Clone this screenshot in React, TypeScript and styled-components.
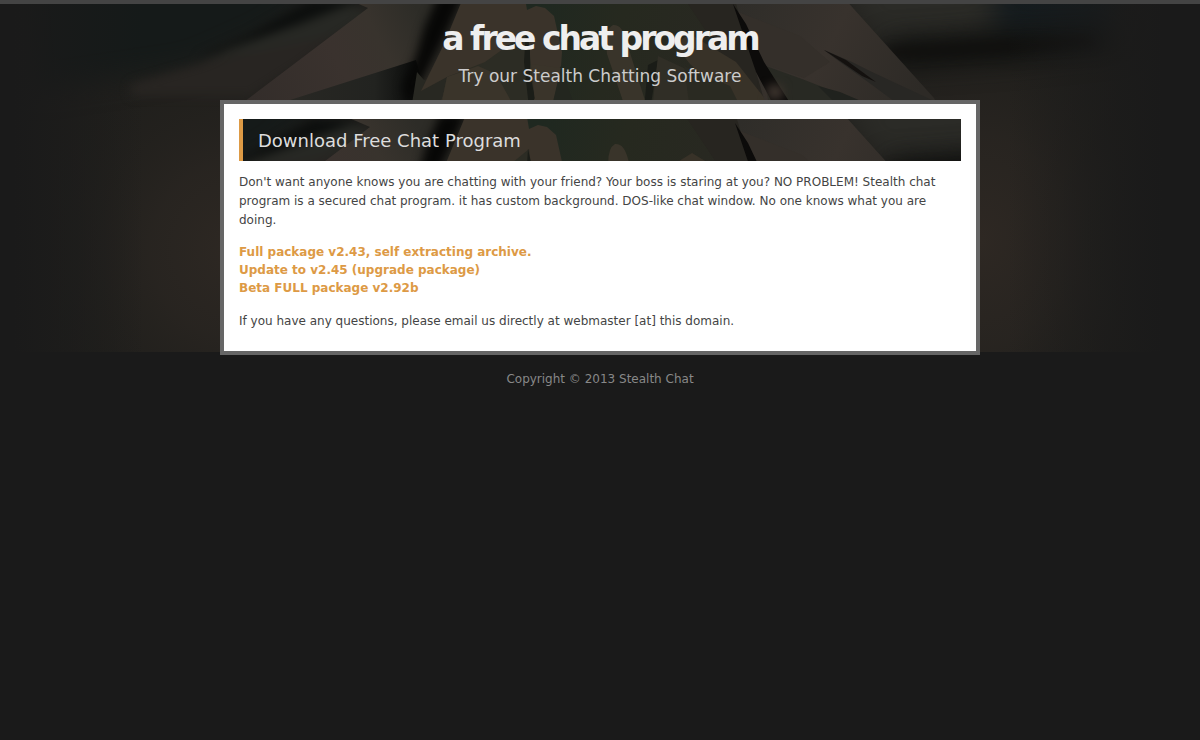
import React, { useId } from "react";
import styled, { createGlobalStyle } from "styled-components";

const GlobalStyle = createGlobalStyle`
  body {
    margin: 0;
    background: #1a1a1a;
    color: #444;
    font-family: "DejaVu Sans", Verdana, sans-serif;
    font-size: 12px;
    line-height: 18px;
  }
`;

const Page = styled.div`
  position: relative;
  display: flex;
  flex-direction: column;
  align-items: center;
  border-top: 4px solid #444;
`;

const ArtLayer = styled.div<{ $height: string; $align: string }>`
  position: absolute;
  z-index: 0;
  top: 0;
  left: 0;
  right: 0;
  height: ${(p) => p.$height};
  display: flex;
  justify-content: center;
  align-items: ${(p) => p.$align};
  overflow: hidden;

  svg {
    flex: none;
  }
`;

const Header = styled.header`
  position: relative;
  z-index: 1;
  padding: 16px 16px 12px;
  text-align: center;
`;

const SiteTitle = styled.h1`
  margin: 0;
  color: #eee;
  font-size: 33px;
  line-height: 38px;
  letter-spacing: -3px;
`;

const Tagline = styled.p`
  margin: 6px 0 0;
  color: #ccc;
  font-size: 17px;
  line-height: 24px;
`;

const Panel = styled.main`
  position: relative;
  z-index: 1;
  box-sizing: border-box;
  width: 100%;
  max-width: 760px;
  padding: 15px 15px 20px;
  border: 4px solid #666;
  background: #fff;
`;

const Heading = styled.h2`
  position: relative;
  margin: 0 0 12px;
  padding: 10px 15px 8px;
  border-left: 4px solid #dd9a45;
  background: #1a1a1a;
  color: #ddd;
  font-size: 18px;
  font-weight: 400;
  line-height: 24px;
  overflow: hidden;
`;

const HeadingText = styled.span`
  position: relative;
  z-index: 1;
`;

const Paragraph = styled.p`
  margin: 0;
  line-height: 19px;
`;

const Downloads = styled.ul`
  list-style: none;
  margin: 13px 0 15px;
  padding: 0;
`;

const DownloadLink = styled.a`
  color: #dd9a45;
  font-weight: 700;
  line-height: 18px;
  text-decoration: none;
`;

const Footer = styled.footer`
  position: relative;
  z-index: 1;
  padding: 15px 0;
  color: #888;
`;

/* Overlapping leaf blades fading out into the page colour at both sides. */
function LeafArt() {
  const id = useId().replace(/[^a-zA-Z0-9]/g, "");
  const u = (n: string) => `url(#${id}${n})`;
  return (
    <svg
      width="1200"
      height="352"
      viewBox="0 0 1200 352"
      colorInterpolationFilters="sRGB"
      aria-hidden="true"
    >
      <defs>
        <filter id={`${id}soft`} x="-50%" y="-50%" width="200%" height="200%">
          <feGaussianBlur stdDeviation="5" />
        </filter>
        <filter id={`${id}wide`} x="-50%" y="-100%" width="200%" height="300%">
          <feGaussianBlur stdDeviation="14" />
        </filter>
        <filter id={`${id}edge`}>
          <feGaussianBlur stdDeviation="0.6" />
        </filter>
        <radialGradient id={`${id}glow`}>
          <stop offset="0" stopColor="#2e2823" />
          <stop offset="0.4" stopColor="#292521" stopOpacity="0.85" />
          <stop offset="1" stopColor="#201f1c" stopOpacity="0" />
        </radialGradient>
        <linearGradient id={`${id}bladeL`} x1="250" y1="100" x2="418" y2="10" gradientUnits="userSpaceOnUse">
          <stop offset="0" stopColor="#332d2a" />
          <stop offset="0.5" stopColor="#3a322e" />
          <stop offset="0.75" stopColor="#38332d" />
          <stop offset="1" stopColor="#2d2c27" />
        </linearGradient>
        <linearGradient id={`${id}bladeR`} x1="740" y1="0" x2="920" y2="90" gradientUnits="userSpaceOnUse">
          <stop offset="0" stopColor="#2f2d29" />
          <stop offset="0.5" stopColor="#38322d" />
          <stop offset="1" stopColor="#2d2a26" />
        </linearGradient>
        <linearGradient id={`${id}under`} x1="280" y1="0" x2="415" y2="0" gradientUnits="userSpaceOnUse">
          <stop offset="0" stopColor="#292824" />
          <stop offset="0.7" stopColor="#222320" />
          <stop offset="1" stopColor="#0c0d0c" />
        </linearGradient>
        <linearGradient id={`${id}green`} x1="540" y1="0" x2="740" y2="60" gradientUnits="userSpaceOnUse">
          <stop offset="0" stopColor="#1f2820" />
          <stop offset="0.4" stopColor="#26291f" />
          <stop offset="1" stopColor="#292822" />
        </linearGradient>
        <linearGradient id={`${id}fade`} x1="0" x2="1200" y1="0" y2="0" gradientUnits="userSpaceOnUse">
          <stop offset="0.01" stopColor="#1a1a1a" />
          <stop offset="0.12" stopColor="#1a1a1a" stopOpacity="0" />
          <stop offset="0.84" stopColor="#1a1a1a" stopOpacity="0" />
          <stop offset="0.97" stopColor="#1a1a1a" />
        </linearGradient>
      </defs>

      <rect width="1200" height="352" fill="#201f1c" />
      <ellipse cx="240" cy="250" rx="220" ry="220" fill={u("glow")} />
      <ellipse cx="980" cy="240" rx="210" ry="260" fill={u("glow")} />

      <g filter={u("wide")}>
        <path d="M20 -30H340L270 30L190 66L30 90Z" fill="#151a19" />
        <path d="M830 -30H1000L990 34L870 40Z" fill="#2b2b27" />
        <path d="M990 -30H1120L1110 34L1000 38Z" fill="#151c1f" />
      </g>
      <path d="M884 44L980 36L1100 30L1124 46L1010 58L892 66Z" fill="#0c0e0d" filter={u("wide")} />
      <path d="M884 46L980 41L1090 36L1096 46L1000 54L892 60Z" fill="#100f0d" opacity="0.7" filter={u("soft")} />
      <g filter={u("soft")}>
        <path d="M196 58L250 34L310 0H362L300 28L244 48Z" fill="#0d0f0e" />
        <path d="M230 48L300 24L350 4L372 14L340 34L300 44L200 62Z" fill="#272824" />
        <path d="M215 60L340 34L300 64L250 96L130 96L130 84Z" fill="#282522" />
      </g>

      <g filter={u("edge")}>
        <path d="M368 8L340 -4H640V120H220Z" fill={u("bladeL")} />
        <path d="M290 100L416 60L430 110H262Z" fill={u("under")} />
      </g>
      <path d="M438 -5H464L446 34L424 78L408 108L402 86L416 56L424 28Z" fill="#070706" filter={u("soft")} />

      <g filter={u("edge")}>
        <path d="M424 80L450 74L438 110H411L417 72Z" fill="#282822" />
        <path d="M463 -2H690L700 110H440L447 77L421 91L444 44Z" fill="#3a332a" />
        <path d="M447 77L485 62L510 44L527 30L534 90L531 110H440Z" fill="#2c2c24" />
        <path d="M447 77L478 66L496 74L516 110H440Z" fill="#3a342a" />
        <path d="M526 30L530 48L530 74L535 98L529 108L524 62Z" fill="#1b1d18" />
        <path d="M525 -2H745L720 110H533L561 66L562 52L554 16L545 8L536 6L527 10Z" fill={u("green")} />
        <path d="M531 64L561 68L552 110H536Z" fill="#3a342a" />
        <path d="M561 68L576 110H551Z" fill="#23261f" />
        <path d="M607 54Q604 30 613 25Q622 24 626 40L648 110H626Z" fill="#39342a" />
        <path d="M648 65L658 60L650 110H644Z" fill="#1a1c17" />
        <path d="M658 56L688 70L735 110H652Z" fill="#302e26" />
        <path d="M684 -2H736L772 110H750L712 40Z" fill="#272520" />
        <path d="M674 44L690 34L736 62L766 100L760 110H742L690 64Z" fill="#383228" />
        <path d="M684 66L730 86L742 110H690Z" fill="#2a2a22" />
      </g>

      <g filter={u("edge")}>
        <path d="M735 0L745 -2H844L934 98L944 120H770L752 58Z" fill={u("bladeR")} />
        <path d="M738 12L800 36L830 62L804 78L765 64Z" fill="#342f2a" />
        <path d="M760 64L802 79L866 104L770 108Z" fill="#282923" />
        <path d="M818 86L840 92L868 104H836Z" fill="#20221e" />
        <path d="M824 50L852 62L872 72L936 102L934 110H906L868 82L840 62Z" fill="#282724" />
        <path d="M824 50L846 60L876 82L862 76Z" fill="#14110f" />
      </g>
      <path d="M733 4L746 24L764 62L792 106H774L756 72Z" fill="#0c0b0a" filter={u("edge")} />
      <ellipse cx="775" cy="92" rx="9" ry="8" fill="#3d342e" filter={u("soft")} />

      <rect width="1200" height="352" fill={u("fade")} />
    </svg>
  );
}

const downloads = [
  "Full package v2.43, self extracting archive.",
  "Update to v2.45 (upgrade package)",
  "Beta FULL package v2.92b",
];

export default function App() {
  return (
    <>
      <GlobalStyle />
      <Page>
        <ArtLayer $height="348px" $align="flex-end">
          <LeafArt />
        </ArtLayer>
        <Header>
          <SiteTitle>a free chat program</SiteTitle>
          <Tagline>Try our Stealth Chatting Software</Tagline>
        </Header>
        <Panel>
          <Heading>
            <ArtLayer $height="100%" $align="flex-start">
              <LeafArt />
            </ArtLayer>
            <HeadingText>Download Free Chat Program</HeadingText>
          </Heading>
          <Paragraph>
            Don't want anyone knows you are chatting with your friend? Your boss is staring at you? NO
            PROBLEM! Stealth chat program is a secured chat program. it has custom background. DOS-like
            chat window. No one knows what you are doing.
          </Paragraph>
          <Downloads>
            {downloads.map((label) => (
              <li key={label}>
                <DownloadLink href="#">{label}</DownloadLink>
              </li>
            ))}
          </Downloads>
          <Paragraph>
            If you have any questions, please email us directly at webmaster [at] this domain.
          </Paragraph>
        </Panel>
        <Footer>Copyright © 2013 Stealth Chat</Footer>
      </Page>
    </>
  );
}
